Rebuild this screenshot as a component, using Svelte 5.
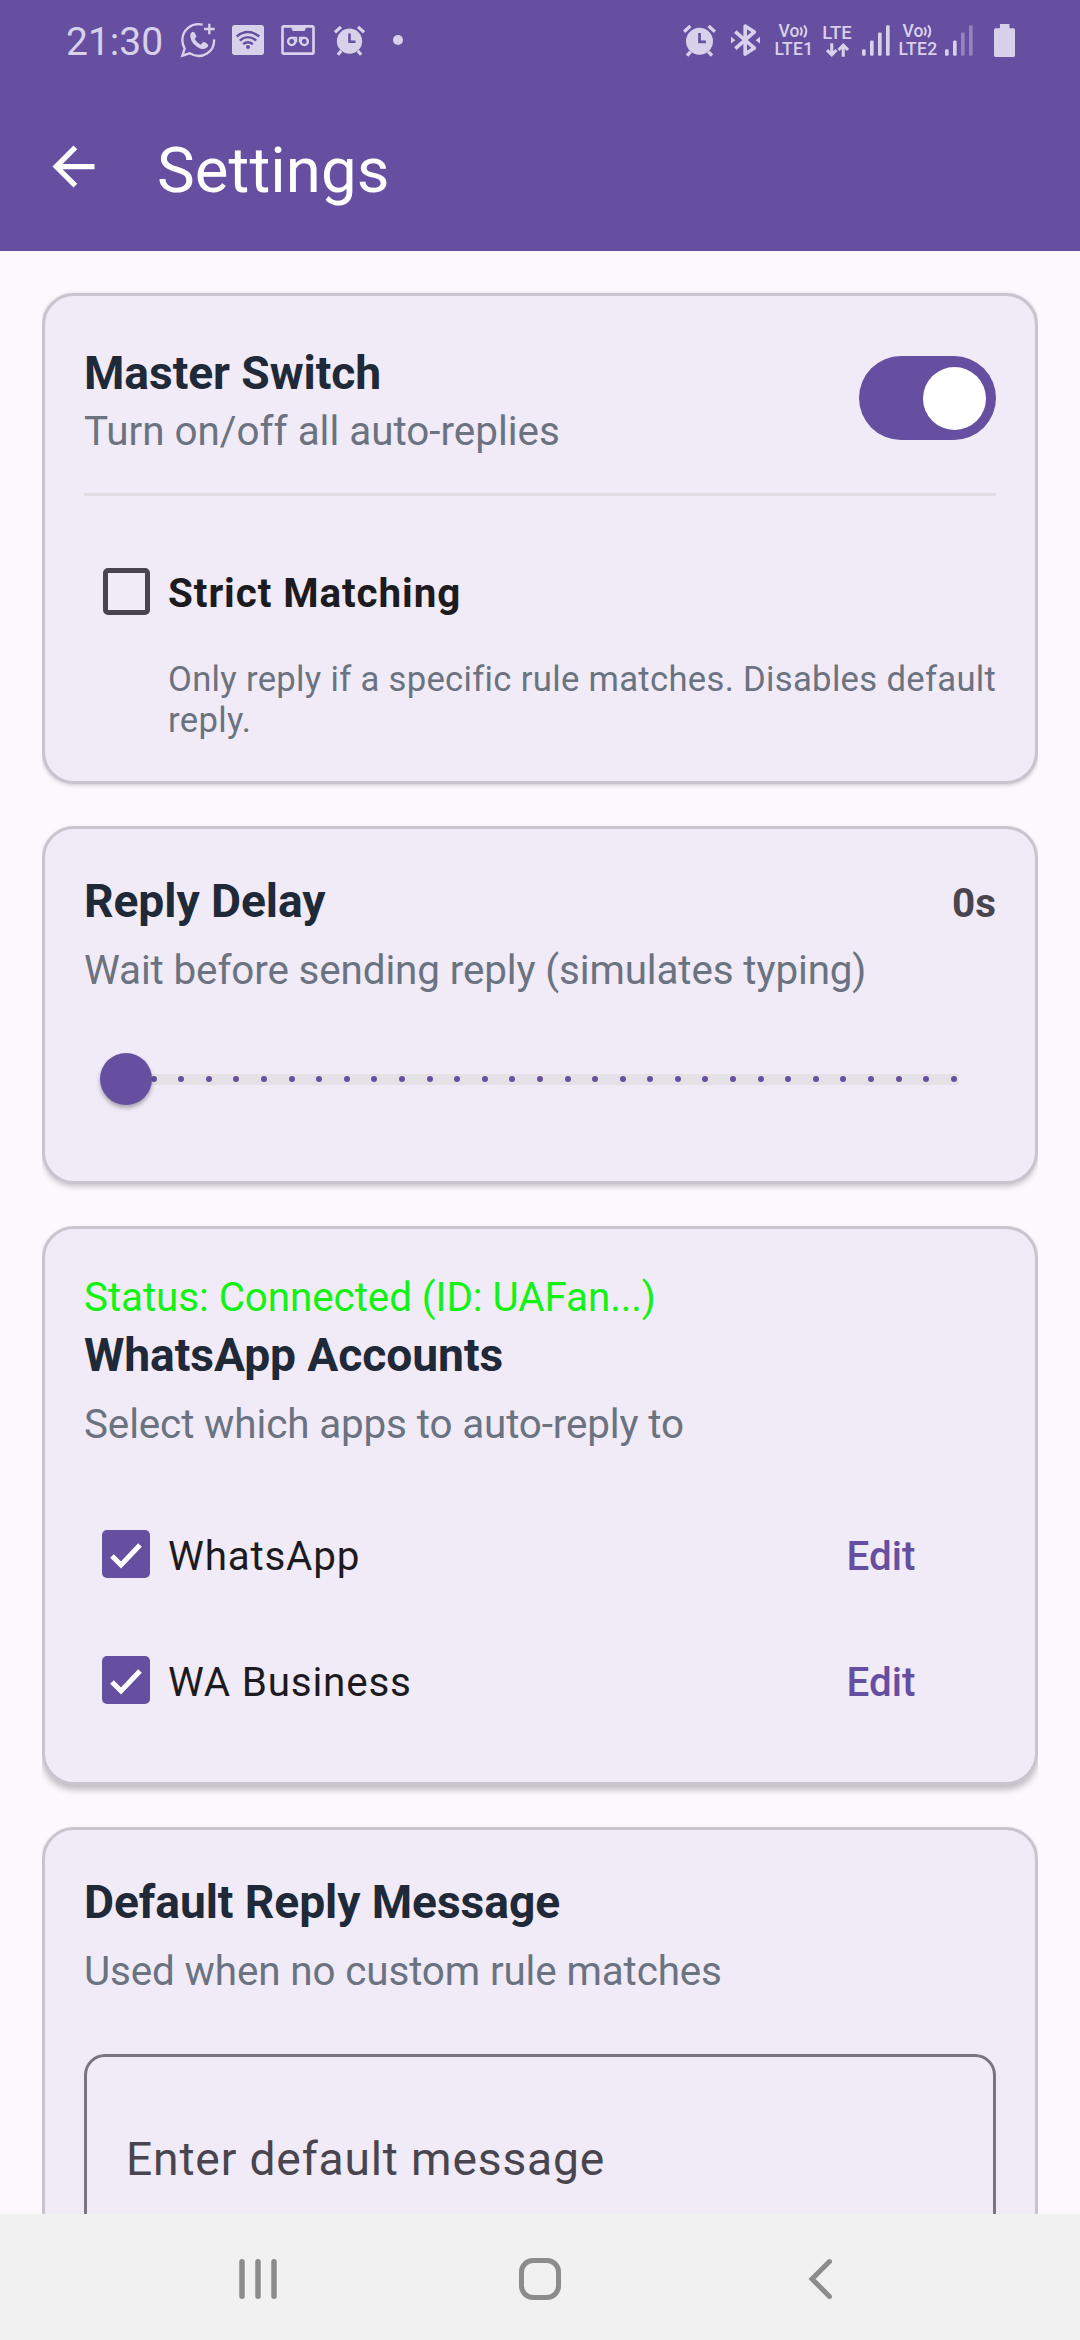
<script lang="ts">
  interface Account {
    name: string;
    enabled: boolean;
  }

  const MAX_DELAY = 30;
  const ticks = Array.from({ length: MAX_DELAY + 1 }, (_, i) => i);

  let masterOn = $state(true);
  let strictMatching = $state(false);
  let delay = $state(0);
  let accounts = $state<Account[]>([
    { name: 'WhatsApp', enabled: true },
    { name: 'WA Business', enabled: true }
  ]);

  let thumbPosition = $derived((delay / MAX_DELAY) * 100);
</script>

{#snippet alarm()}
  <svg class="alarm" viewBox="0 0 98 98" fill="none" stroke="currentColor">
    <path d="M3 23 22 6M95 23 76 6" stroke-width="10" />
    <path d="M23 82 12 94M75 82 86 94" stroke-width="10" />
    <circle cx="49" cy="51" r="40" fill="currentColor" stroke="none" />
    <path class="cutout" d="M49 27v26h19" stroke-width="8" />
  </svg>
{/snippet}

{#snippet signal(level: number)}
  <svg class="signal" viewBox="0 0 84 92" fill="currentColor">
    {#each [20, 46, 70, 92] as height, i}
      <rect x={i * 24} y={92 - height} width="11" {height} rx="4" opacity={i < level ? 1 : 0.4} />
    {/each}
  </svg>
{/snippet}

{#snippet volte(sim: number)}
  <div class="volte">
    <span class="vo">Vo<svg viewBox="0 0 30 40" fill="none" stroke="currentColor" stroke-width="6">
        <path d="M4 9q9 12 0 24M15 3q14 17 0 36" />
      </svg></span>
    <span>LTE{sim}</span>
  </div>
{/snippet}

{#snippet checkbox(checked: boolean, label: string, onToggle: () => void)}
  <button class="checkbox" role="checkbox" aria-checked={checked} aria-label={label} onclick={onToggle}>
    <span class="box" class:checked>
      {#if checked}
        <svg viewBox="0 0 48 48" fill="none" stroke="#fff" stroke-width="5">
          <path d="M10 26l9 9 19-20" />
        </svg>
      {/if}
    </span>
  </button>
{/snippet}

<div class="screen">
  <header>
    <div class="status-bar">
      <span class="clock">21:30</span>
      <svg class="whatsapp" viewBox="0 0 108 108" fill="none" stroke="currentColor" stroke-width="7">
        <path d="M68 8C35 0 7 24 7 55c0 10 3 18 7 25L7 101l22-7c38 22 76-7 73-42" />
        <path d="M88 5v32M72 21h32" />
        <path
          d="M31 37q5-12 12-6l6 11q1 3-5 9 6 12 18 17l7-7q3-2 6 0l8 6q4 3-1 9-8 8-20 4Q35 69 31 45z"
          fill="currentColor"
          stroke="none"
        />
      </svg>
      <svg class="wifi" viewBox="0 0 95 89" fill="none" stroke-width="7">
        <rect width="95" height="89" rx="8" fill="currentColor" />
        <g class="cutout">
          <path d="M14 34q33-26 67 0M23 46q24-20 49 0M33 57q14-12 29 0" />
        </g>
        <circle class="cutout-fill" cx="47.500" cy="65" r="6" />
      </svg>
      <svg class="voicemail" viewBox="0 0 102 91" fill="none" stroke="currentColor" stroke-width="8">
        <rect x="4" y="4" width="94" height="83" rx="4" />
        <path d="M29 4h48l-6 14H35z" fill="currentColor" stroke="none" />
        <g stroke-width="7">
          <circle cx="32" cy="50" r="11" />
          <circle cx="70" cy="50" r="11" />
          <path d="M32 38h16M54 38h16M46 38v14M56 38v14" stroke-width="5" />
        </g>
      </svg>
      <span class="alarm-small">{@render alarm()}</span>
      <span class="more-dot"></span>

      <div class="status-right">
        {@render alarm()}
        <svg class="bluetooth" viewBox="0 0 88 101" fill="none" stroke="currentColor" stroke-width="11">
          <path d="M13 25 71 75 43 93V8l28 18L13 77" stroke-linejoin="round" />
          <path d="M0 41v20l13-10zM88 41v20l-13-10z" fill="currentColor" stroke="none" />
        </svg>
        {@render volte(1)}
        <div class="lte">
          <span>LTE</span>
          <svg viewBox="0 0 68 40" fill="none" stroke="currentColor" stroke-width="9">
            <path d="M17 0v34M3 20l14 14 14-14M51 40V6M37 20 51 6l14 14" />
          </svg>
        </div>
        {@render signal(4)}
        {@render volte(2)}
        {@render signal(2)}
        <svg class="battery" viewBox="0 0 64 100" fill="currentColor">
          <path d="M18 0h29v13h12q5 0 5 5v77q0 5-5 5H5q-5 0-5-5V18q0-5 5-5h13z" />
        </svg>
      </div>
    </div>

    <div class="app-bar">
      <button class="back" aria-label="Back">
        <svg viewBox="0 0 24 24" fill="currentColor">
          <path d="M20 11H7.830l5.590-5.590L12 4l-8 8 8 8 1.410-1.410L7.830 13H20z" />
        </svg>
      </button>
      <h1>Settings</h1>
    </div>
  </header>

  <main>
    <section class="card master">
      <div class="row">
        <div>
          <h2>Master Switch</h2>
          <p class="hint">Turn on/off all auto-replies</p>
        </div>
        <button
          class="switch"
          class:on={masterOn}
          role="switch"
          aria-checked={masterOn}
          aria-label="Master Switch"
          onclick={() => (masterOn = !masterOn)}
        >
          <span class="switch-thumb"></span>
        </button>
      </div>
      <hr />
      <div class="option">
        {@render checkbox(strictMatching, 'Strict Matching', () => (strictMatching = !strictMatching))}
        <span class="option-label strong">Strict Matching</span>
      </div>
      <p class="note">Only reply if a specific rule matches. Disables default reply.</p>
    </section>

    <section class="card">
      <div class="row">
        <h2>Reply Delay</h2>
        <span class="delay">{delay}s</span>
      </div>
      <p class="hint">Wait before sending reply (simulates typing)</p>
      <div class="slider">
        <div class="track">
          {#each ticks as tick (tick)}
            <span class="tick"></span>
          {/each}
          <div class="thumb-rail">
            <span class="thumb" style="left: {thumbPosition}%"></span>
          </div>
        </div>
      </div>
    </section>

    <section class="card raised">
      <p class="status">Status: Connected (ID: UAFan...)</p>
      <h2>WhatsApp Accounts</h2>
      <p class="hint">Select which apps to auto-reply to</p>
      <div class="accounts">
        {#each accounts as account (account.name)}
          <div class="option">
            {@render checkbox(account.enabled, account.name, () => (account.enabled = !account.enabled))}
            <span class="option-label">{account.name}</span>
            <button class="edit">Edit</button>
          </div>
        {/each}
      </div>
    </section>

    <section class="card">
      <h2>Default Reply Message</h2>
      <p class="hint">Used when no custom rule matches</p>
      <div class="field">Enter default message</div>
    </section>
  </main>

  <nav>
    <svg viewBox="0 0 42 42" fill="none" stroke="currentColor" stroke-width="5.500" stroke-linecap="round">
      <path d="M5 3.700v34.600M21 3.700v34.600M37 3.700v34.600" />
    </svg>
    <svg viewBox="0 0 42 42" fill="none" stroke="currentColor" stroke-width="5">
      <rect x="2.500" y="2.500" width="37" height="37" rx="11.500" />
    </svg>
    <svg viewBox="0 0 42 42" fill="none" stroke="currentColor" stroke-width="5" stroke-linecap="round">
      <path d="M29.500 3.600 12 21l17.500 17.400" />
    </svg>
  </nav>
</div>

<style>
  :global(body) {
    margin: 0;
    background: #fdf8fe;
  }

  .screen {
    display: flex;
    flex-direction: column;
    width: 1080px;
    height: 2340px;
    overflow: hidden;
    background: #fdf8fe;
    font-family: Roboto, 'Liberation Sans', sans-serif;
  }

  h1,
  h2,
  p {
    margin: 0;
  }

  button {
    padding: 0;
    border: none;
    background: none;
    color: inherit;
    font: inherit;
    cursor: pointer;
  }

  svg {
    display: block;
    flex-shrink: 0;
  }

  header {
    flex-shrink: 0;
    height: 251px;
    background: #664fa0;
    color: #fff;
  }

  /* Status bar */
  .status-bar {
    display: flex;
    align-items: center;
    height: 80px;
    padding: 0 65px 0 66px;
    color: #d9d1ea;
  }

  .cutout {
    stroke: #664fa0;
  }

  .cutout-fill {
    fill: #664fa0;
  }

  .clock {
    width: 114px;
    padding-top: 4px;
    font-size: 39px;
    line-height: 46px;
  }

  .whatsapp {
    width: 36px;
    height: 36px;
  }

  .wifi {
    width: 32px;
    height: 30px;
    margin-left: 16px;
  }

  .voicemail {
    width: 34px;
    height: 30px;
    margin-left: 17px;
  }

  .alarm {
    width: 33px;
    height: 33px;
  }

  .alarm-small {
    margin-left: 19px;
  }

  .alarm-small .alarm {
    width: 31px;
    height: 31px;
  }

  .more-dot {
    width: 10px;
    height: 10px;
    margin-left: 28px;
    border-radius: 50%;
    background: currentColor;
  }

  .status-right {
    display: flex;
    align-items: center;
    margin-left: auto;
  }

  .bluetooth {
    width: 29px;
    height: 34px;
    margin-left: 15px;
  }

  .volte {
    display: flex;
    flex-direction: column;
    align-items: center;
    width: 40px;
    margin-left: 14px;
    font-size: 17.500px;
    font-weight: 500;
    line-height: 18px;
    letter-spacing: 0.3px;
    white-space: nowrap;
  }

  .vo {
    display: flex;
    align-items: center;
    letter-spacing: 0;
  }

  .vo svg {
    width: 10px;
    height: 14px;
  }

  .lte {
    display: flex;
    flex-direction: column;
    align-items: center;
    width: 32px;
    margin-left: 7px;
    font-size: 18.500px;
    font-weight: 500;
    line-height: 19px;
  }

  .lte svg {
    width: 23px;
    height: 14px;
  }

  .signal {
    width: 28px;
    height: 31px;
    margin-left: 9px;
  }

  .signal + .volte {
    margin-left: 8px;
  }

  .volte + .signal {
    margin-left: 7px;
  }

  .battery {
    width: 21px;
    height: 33px;
    margin-left: 21px;
  }

  /* App bar */
  .app-bar {
    display: flex;
    align-items: center;
    gap: 52px;
    height: 172px;
    padding-left: 42px;
  }

  .back svg {
    width: 63px;
    height: 63px;
  }

  h1 {
    padding-top: 9px;
    font-size: 63.500px;
    font-weight: 400;
    line-height: 74px;
    letter-spacing: 0.1px;
  }

  /* Cards */
  main {
    display: flex;
    flex: 1;
    flex-direction: column;
    gap: 42px;
    min-height: 0;
    padding: 42px 42px 0;
    overflow: hidden;
  }

  .card {
    flex-shrink: 0;
    padding: 45px 39px 39px;
    border: 3px solid #cac4d0;
    border-radius: 32px;
    background: #f0ebf7;
    box-shadow: 0 3px 5px rgba(0, 0, 0, 0.2);
    clip-path: inset(-14px 0);
  }

  .card.master {
    padding-top: 50px;
    padding-bottom: 40px;
    box-shadow: 0 1px 4px rgba(0, 0, 0, 0.2);
  }

  .card.raised {
    box-shadow: 0 5px 6px rgba(0, 0, 0, 0.24);
  }

  .row {
    display: flex;
    justify-content: space-between;
    align-items: flex-start;
  }

  h2 {
    color: #1f2937;
    font-size: 46.200px;
    font-weight: 700;
    line-height: 54px;
    letter-spacing: -0.08px;
  }

  .hint {
    margin-top: 19px;
    color: #6b7280;
    font-size: 40.400px;
    line-height: 47px;
    letter-spacing: -0.13px;
  }

  .row .hint {
    margin-top: 8px;
    letter-spacing: 0;
  }

  .switch {
    display: flex;
    width: 137px;
    height: 84px;
    margin-top: 10px;
    padding: 10.500px;
    border-radius: 42px;
    background: #cac4d0;
    box-sizing: border-box;
  }

  .switch.on {
    justify-content: flex-end;
    background: #664fa0;
  }

  .switch-thumb {
    width: 63px;
    height: 63px;
    border-radius: 50%;
    background: #fff;
  }

  hr {
    height: 3px;
    margin: 38px 0 32px;
    border: none;
    background: #dfdde3;
  }

  .option {
    display: flex;
    align-items: center;
    height: 126px;
  }

  .checkbox {
    display: flex;
    justify-content: center;
    width: 84px;
  }

  .box {
    width: 47px;
    height: 47px;
    border: 5px solid #49454f;
    border-radius: 5px;
    box-sizing: border-box;
  }

  .box.checked {
    width: 48px;
    height: 48px;
    border: none;
    background: #664fa0;
  }

  .option-label {
    flex: 1;
    padding-top: 4px;
    color: #1d1b20;
    font-size: 40.400px;
    line-height: 47px;
    letter-spacing: 0.8px;
  }

  .option-label.strong {
    font-weight: 700;
    letter-spacing: 0.92px;
  }

  .note {
    margin: 5px 0 0 84px;
    color: #6b7280;
    font-size: 34.650px;
    line-height: 41px;
    letter-spacing: 0.31px;
    /* the first line runs right up to the card padding */
    margin-right: -4px;
  }

  .delay {
    padding-top: 6px;
    color: #49454f;
    font-size: 40.400px;
    font-weight: 700;
    line-height: 47px;
  }

  .slider {
    display: flex;
    align-items: center;
    height: 126px;
    margin-top: 22px;
    padding: 0 37px;
  }

  .track {
    position: relative;
    display: flex;
    flex: 1;
    justify-content: space-between;
    align-items: center;
    height: 11px;
    padding: 0 2px;
    background: #e4e1e7;
  }

  .tick {
    width: 6px;
    height: 6px;
    border-radius: 50%;
    background: #664fa0;
  }

  .thumb-rail {
    position: absolute;
    inset: 0 5px;
  }

  .thumb {
    position: absolute;
    top: 50%;
    width: 52px;
    height: 52px;
    border-radius: 50%;
    background: #664fa0;
    box-shadow: 0 3px 4px rgba(0, 0, 0, 0.3);
    transform: translate(-50%, -50%);
  }

  .status {
    margin-bottom: 7px;
    color: #12f312;
    font-size: 40.400px;
    line-height: 47px;
    letter-spacing: -0.08px;
  }

  .accounts {
    margin-top: 43px;
  }

  .edit {
    width: 230px;
    padding-top: 4px;
    color: #664fa0;
    font-size: 40.400px;
    font-weight: 500;
    line-height: 47px;
  }

  .field {
    height: 206px;
    margin-top: 59px;
    padding: 0 39px;
    border: 3px solid #79747e;
    border-radius: 21px;
    color: #49454f;
    font-size: 46.200px;
    line-height: 205px;
    letter-spacing: 0.83px;
  }

  /* System navigation */
  nav {
    display: flex;
    flex-shrink: 0;
    justify-content: space-between;
    align-items: center;
    height: 126px;
    padding: 3px 238px 0 237px;
    background: #f1f1f1;
    color: #8c8c8c;
    box-sizing: border-box;
  }

  nav svg {
    width: 42px;
    height: 42px;
  }
</style>
